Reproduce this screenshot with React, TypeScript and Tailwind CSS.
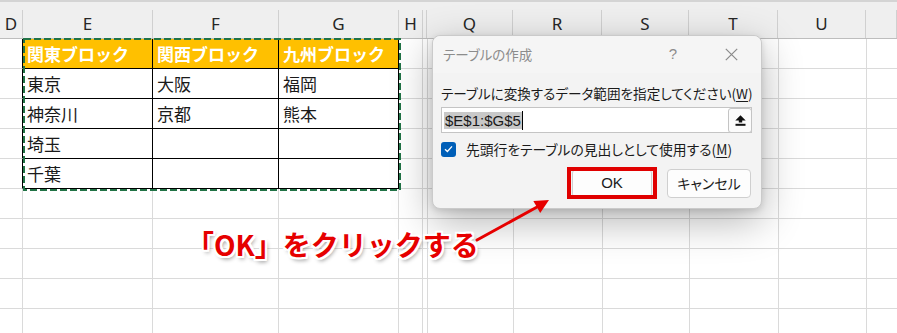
import React from "react";

const COLS = [23, 130, 126, 120, 24, 4, 86, 89, 87, 89, 88, 31];
const LETTERS = ["D", "E", "F", "G", "H", "", "Q", "R", "S", "T", "U", ""];

const DATA: string[][] = [
  ["", "関東ブロック", "関西ブロック", "九州ブロック"],
  ["", "東京", "大阪", "福岡"],
  ["", "神奈川", "京都", "熊本"],
  ["", "埼玉", "", ""],
  ["", "千葉", "", ""],
  [],
  [],
  [],
  [],
  [],
];

function Cell({ r, c, w }: { r: number; c: number; w: number }) {
  const inTable = r < 5 && c >= 1 && c <= 3;
  const header = r === 0 && inTable;
  const text = DATA[r]?.[c] ?? "";
  const leftOfTable = r < 5 && c === 0;
  const rightCls = inTable || leftOfTable ? "border-r-black" : "border-r-[#dadada]";
  const bottomCls = inTable ? "border-b-black" : "border-b-[#dadada]";
  const bg = header ? "bg-[#ffc000]" : "bg-white";
  const txt = header ? "text-white font-bold" : "text-[#1a1a1a]";
  return (
    <div
      className={`h-[30px] shrink-0 border-r border-b ${rightCls} ${bottomCls} ${bg} ${txt} flex items-center pl-[4px] text-[17px] leading-none whitespace-nowrap overflow-hidden`}
      style={{ width: w }}
    >
      {text}
    </div>
  );
}

function UploadIcon() {
  return (
    <svg width="11" height="11" viewBox="0 0 11 11">
      <path d="M5.5 0.3 L10.7 5.5 L7.2 5.5 L7.2 7.6 L3.8 7.6 L3.8 5.5 L0.3 5.5 Z" fill="#111" />
      <rect x="0.5" y="8.8" width="10" height="2" fill="#111" />
    </svg>
  );
}

function Dialog() {
  return (
    <div className="absolute left-[432px] top-[35px] w-[330px] rounded-[8px] border border-[#cacaca] bg-[#f3f3f3] shadow-[0_12px_40px_rgba(0,0,0,0.3),0_2px_6px_rgba(0,0,0,0.12)] [font-family:'Noto_Sans_CJK_JP',sans-serif] [font-feature-settings:'palt']">
      <div className="h-[37px] flex items-center pl-[10px] pr-[7px] rounded-t-[8px] bg-[#f5f5f5]">
        <span className="text-[13.5px] text-[#8c8c8c]">テーブルの作成</span>
        <span className="ml-auto w-[20px] text-center text-[15px] text-[#8c8c8c] [font-family:'Liberation_Sans',sans-serif]">?</span>
        <span className="ml-[25px] w-[46px] flex items-center justify-center">
          <svg width="13" height="13" viewBox="0 0 13 13">
            <path d="M0.8 0.8 L12.2 12.2 M12.2 0.8 L0.8 12.2" stroke="#8a8a8a" strokeWidth="1.2" />
          </svg>
        </span>
      </div>
      <div className="pl-[8px] pr-[9px] pt-[12px] pb-[10px] flex flex-col">
        <div className="h-[16px] leading-[16px] text-[13.6px] text-[#1b1b1b] whitespace-nowrap">
          テーブルに変換するデータ範囲を指定してください(<span className="underline underline-offset-2">W</span>)
        </div>
        <div className="mt-[6px] h-[26px] bg-white border border-[#c4c4c4] flex items-center">
          <div className="flex-1 flex items-center pl-[2px]">
            <span className="bg-[#c8c8c8] text-[15px] leading-[17px] text-[#1a1a1a] [font-family:'Liberation_Sans',sans-serif] px-[1px]">
              $E$1:$G$5
            </span>
            <span className="w-[1px] h-[19px] bg-black" />
          </div>
          <div className="w-[24px] h-[25px] mr-[-1px] border border-[#c4c4c4] rounded-[3px] bg-[#fbfbfb] flex items-center justify-center">
            <UploadIcon />
          </div>
        </div>
        <div className="mt-[8px] h-[16px] flex items-center">
          <div className="w-[15px] h-[15px] rounded-[3px] bg-[#005fb8] flex items-center justify-center">
            <svg width="9" height="8" viewBox="0 0 9 8">
              <path d="M1 4.2 L3.4 6.5 L8 1.4" stroke="#fff" strokeWidth="1.3" fill="none" />
            </svg>
          </div>
          <span className="ml-[10px] text-[13.8px] leading-[16px] text-[#1b1b1b] whitespace-nowrap">
            先頭行をテーブルの見出しとして使用する(<span className="underline underline-offset-2">M</span>)
          </span>
        </div>
        <div className="mt-[12px] flex justify-end gap-[15px] pr-[1px]">
          <div className="relative w-[80px] h-[29px]">
            <div className="w-full h-full rounded-[4px] border border-[#cfcfcf] bg-[#fdfdfd] flex items-center justify-center text-[15px] text-[#1b1b1b] [font-family:'Liberation_Sans',sans-serif]">
              OK
            </div>
            <div className="absolute left-[-5px] right-[-5px] top-[-2px] bottom-[-1px] border-[4px] border-[#e00000]" />
          </div>
          <div className="w-[84px] h-[29px] rounded-[4px] border border-[#cfcfcf] bg-[#fdfdfd] flex items-center justify-center text-[14px] text-[#1b1b1b]">
            キャンセル
          </div>
        </div>
      </div>
    </div>
  );
}

export default function App() {
  return (
    <div className="relative w-[897px] h-[333px] overflow-hidden bg-white [font-family:'Noto_Sans_CJK_JP',sans-serif]">
      <div className="flex flex-col">
        <div className="h-[2px] bg-[#d4d4d4]" />
        <div className="h-[37px] bg-[#efefef] border-b border-[#bdbdbd] flex items-end">
          {COLS.map((w, i) => (
            <div
              key={i}
              className="h-[28px] shrink-0 border-r border-[#d0d0d0] flex items-center justify-center text-[17px] text-[#262626] [font-family:'Noto_Sans',sans-serif]"
              style={{ width: w }}
            >
              {LETTERS[i]}
            </div>
          ))}
        </div>
        {DATA.map((_, r) => (
          <div key={r} className="flex">
            {COLS.map((w, c) => (
              <Cell key={c} r={r} c={c} w={w} />
            ))}
          </div>
        ))}
      </div>

      <svg className="absolute left-[23px] top-[38px]" width="378" height="153" viewBox="0 0 378 153">
        <rect x="1" y="1" width="376" height="151" fill="none" stroke="#217346" strokeWidth="2" strokeDasharray="7 3" />
      </svg>

      <Dialog />

      <div className="absolute left-[186px] top-[227px] text-[28px] leading-[34px] font-bold text-[#e60000] whitespace-nowrap [text-shadow:-2px_-2px_0_#fff,2px_-2px_0_#fff,-2px_2px_0_#fff,2px_2px_0_#fff,0_-2px_0_#fff,0_2px_0_#fff,-2px_0_0_#fff,2px_0_0_#fff,2px_3px_4px_rgba(0,0,0,0.45)]">
        「OK」をクリックする
      </div>

      <svg className="absolute left-0 top-0" width="897" height="333" viewBox="0 0 897 333">
        <line x1="477" y1="240" x2="538" y2="206.5" stroke="#e60000" strokeWidth="3" strokeLinecap="round" />
        <polygon points="549,200 540.2,213 533.4,201" fill="#e60000" />
      </svg>
    </div>
  );
}
